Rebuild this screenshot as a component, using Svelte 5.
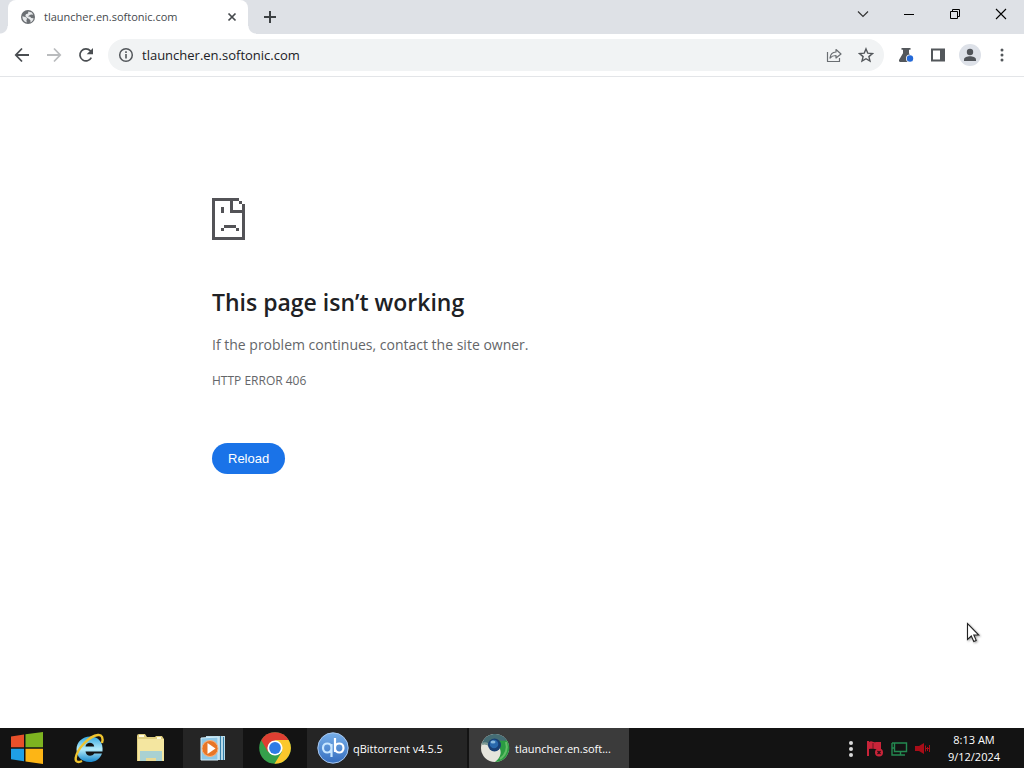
<script>
  let address = $state('tlauncher.en.softonic.com');
</script>

<div class="screen">
  <header class="tabstrip">
    <div class="tab">
      <svg class="globe" viewBox="0 0 16 16" width="16" height="16" aria-hidden="true">
        <circle cx="8" cy="8" r="7" fill="#6b6f73" />
        <path d="M2.400 7.300 6 8.200l1.200 1.500-.8 1.200.4 2.600C4 12.900 2.200 10.600 2.400 7.300zM8.300 2.400l3.600 1.100 1.300 2.300-2.200-.3-2 .9-.9 1.100 2 .3 1.200 1.200 2.300.3c-.3 2-1.500 3.500-3.200 4.300l.1-2-1.300-1.500-2.200-1.400L5.300 7l.6-1.700 2.200-.9z" fill="#e6e8ea" />
      </svg>
      <span class="tab-title">tlauncher.en.softonic.com</span>
      <button class="tab-close" aria-label="Close tab">
        <svg viewBox="0 0 16 16" width="16" height="16"><path d="M4.500 4.500l7 7m0-7l-7 7" stroke="#45494d" stroke-width="1.700" /></svg>
      </button>
    </div>
    <button class="new-tab" aria-label="New tab">
      <svg viewBox="0 0 16 16" width="16" height="16"><path d="M8 2v12M2 8h12" stroke="#3c4043" stroke-width="2" /></svg>
    </button>
    <div class="controls">
      <button aria-label="Search tabs"><svg viewBox="0 0 16 16" width="16" height="16"><path d="M3 5.500l5 5 5-5" fill="none" stroke="#333" stroke-width="1.200" /></svg></button>
      <button aria-label="Minimize"><svg viewBox="0 0 16 16" width="16" height="16"><path d="M3 8.500h10" stroke="#000" /></svg></button>
      <button aria-label="Restore"><svg viewBox="0 0 16 16" width="16" height="16"><path d="M3.500 5.500h7v7h-7zM5.500 5V3.500h7v7H11" fill="none" stroke="#000" /></svg></button>
      <button aria-label="Close"><svg viewBox="0 0 16 16" width="16" height="16"><path d="M3 3l10 10M13 3L3 13" stroke="#000" stroke-width="1.100" /></svg></button>
    </div>
  </header>

  <nav class="toolbar">
    <button aria-label="Back"><svg viewBox="0 0 16 16" width="16" height="16"><path d="M15 8H2M8 1.500L1.800 8 8 14.500" fill="none" stroke="#4a4e52" stroke-width="1.800" /></svg></button>
    <button aria-label="Forward" disabled><svg viewBox="0 0 16 16" width="16" height="16"><path d="M1 8h13M8 1.500L14.200 8 8 14.500" fill="none" stroke="#babcbe" stroke-width="1.800" /></svg></button>
    <button aria-label="Reload page"><svg viewBox="0 0 16 16" width="16" height="16"><path d="M13.300 10.600A6 6 0 1 1 12.400 3.900L13.600 5.200" fill="none" stroke="#4a4e52" stroke-width="1.700" /><path d="M15 1v6.300H8.700z" fill="#4a4e52" /></svg></button>
    <div class="omnibox">
      <button class="site-info" aria-label="Site information"><svg viewBox="0 0 16 16" width="16" height="16"><circle cx="8" cy="8" r="6.300" fill="none" stroke="#53575b" stroke-width="1.500" /><path d="M8 7v4.500M8 4.300V6" stroke="#53575b" stroke-width="1.600" /></svg></button>
      <input type="text" aria-label="Address" bind:value={address} />
      <button aria-label="Share"><svg viewBox="0 0 16 16" width="16" height="16"><path d="M1.500 5v9.500h12V11M4 11c.4-4 2.500-5.800 6-6V2.500L15 7l-5 4V8.500C7.400 8.500 5.500 9.200 4 11z" fill="none" stroke="#6a6e72" stroke-width="1.200" stroke-linejoin="round" /></svg></button>
      <button aria-label="Bookmark this tab"><svg viewBox="0 0 16 16" width="16" height="16"><path d="M8 1.900l1.800 4.300 4.600.4-3.500 3 1.100 4.500L8 11.700l-4 2.400 1.100-4.500-3.500-3 4.600-.4z" fill="none" stroke="#53575b" stroke-width="1.400" /></svg></button>
    </div>
    <button aria-label="Experiments"><svg viewBox="0 0 16 16" width="16" height="16"><path d="M3.500 1h9v1.800H11v3.400L15 13.300Q15 15 13.500 15H2Q.5 14.500 1 13L5 6.200V2.800H3.500z" fill="#53575b" /><circle cx="12" cy="11.500" r="4" fill="#fff" /><circle cx="12" cy="11.500" r="3.200" fill="#2469d8" /></svg></button>
    <button aria-label="Side panel"><svg viewBox="0 0 16 16" width="16" height="16"><path d="M1 1.500h14v13H1zm2 2v9h7v-9z" fill="#53575b" fill-rule="evenodd" /></svg></button>
    <button aria-label="Profile"><svg viewBox="0 0 24 24" width="24" height="24"><circle cx="12" cy="12" r="11" fill="#dde1e8" /><circle cx="12" cy="9" r="3.200" fill="#505459" /><path d="M6 18v-1.500c0-2.300 3.500-3.300 6-3.300s6 1 6 3.300V18z" fill="#505459" /></svg></button>
    <button aria-label="Menu"><svg viewBox="0 0 16 16" width="16" height="16"><g fill="#53575b"><circle cx="8" cy="3" r="1.500" /><circle cx="8" cy="8" r="1.500" /><circle cx="8" cy="13" r="1.500" /></g></svg></button>
  </nav>

  <main>
    <div class="message">
      <svg class="sad" viewBox="0 0 33 42" width="33" height="42" shape-rendering="crispEdges" aria-hidden="true">
        <path fill="#535357" d="M0 0h27v3H21v9h9V6h3v36H0zM3 3v36h27V15H18V3zM27 3h3v3h-3zM9 9h3v6H9zM12 27h12v3H12zM9 30h3v3H9zM24 30h3v3h-3z" fill-rule="evenodd" />
      </svg>
      <h1>This page isn’t working</h1>
      <p>If the problem continues, contact the site owner.</p>
      <div class="code">HTTP ERROR 406</div>
      <button class="reload">Reload</button>
    </div>
    <svg class="cursor" viewBox="0 0 14 22" width="14" height="22" aria-hidden="true">
      <path d="M1.500 1.500v16l3.800-3.500 2.500 5.500 2.400-1.100-2.400-5.400h5z" fill="#fff" stroke="#222" stroke-width="1.100" />
    </svg>
  </main>

  <footer class="taskbar">
    <button class="start" aria-label="Start">
      <svg viewBox="0 0 32 32" width="32" height="32"><path d="M0 4.500l13-2v12.800H0z" fill="#e8502a" /><path d="M14.500 2.200L32 0v15.300H14.500z" fill="#7db320" /><path d="M0 16.700h13v12.600l-13-2z" fill="#1f9fe6" /><path d="M14.500 16.700H32V32l-17.500-2.500z" fill="#fdb515" /></svg>
    </button>
    <button class="app" aria-label="Internet Explorer">
      <svg viewBox="0 0 32 32" width="32" height="32">
        <defs><linearGradient id="ie" x1="0" y1="0" x2="0" y2="1"><stop offset="0" stop-color="#35a8df" /><stop offset=".5" stop-color="#b5ecfa" /><stop offset="1" stop-color="#1687cc" /></linearGradient></defs>
        <path d="M29.500 19.500H12.500c.5 5 6.500 5.500 8.700 2H29C27 27.500 22 30 16.500 30 9 30 3.500 25 3.500 17.500S9.500 4.500 17 4.500c8.500 0 13.500 6 12.500 15zM12.500 14.500h8.700c-.6-5-8-5-8.700 0z" fill="url(#ie)" fill-rule="evenodd" />
        <path d="M29 11c1.500-5 0-8.500-4-8C16 4 4 17 2.700 26c-.5 4 2.500 5 6.300 3" fill="none" stroke="#efc42f" stroke-width="2.400" />
      </svg>
    </button>
    <button class="app" aria-label="File Explorer">
      <svg viewBox="0 0 32 32" width="32" height="32"><path d="M2 4q0-2 2-2h6l2 3h8l1-1h6l2 3v22H2z" fill="#e0cf80" /><path d="M3 7h26v22q-13-3-26 0z" fill="#f4e6a0" /><path d="M4 3h5v2H4zM22 5h4v2h-4z" fill="#fffbe0" /><path d="M5 19h22v10h-6v-3H11v3H5z" fill="#a9d1d2" /><path d="M11 26h10v3H11z" fill="#e8d994" /></svg>
    </button>
    <button class="app lit" aria-label="Media Player">
      <svg viewBox="0 0 32 32" width="32" height="32"><path d="M9 4h19v24H9z" fill="#b8dbe9" /><path d="M23.500 4v24M26.500 5v23" stroke="#347fa9" /><path d="M4 6l17-1v23H4z" fill="#8fc8e6" stroke="#d3edf9" /><circle cx="13" cy="16.500" r="8" fill="#e87626" stroke="#f9b580" /><path d="M10.500 11l8 5.500-8 5.500z" fill="#fff" /></svg>
    </button>
    <button class="app" aria-label="Chrome">
      <svg viewBox="0 0 32 32" width="32" height="32"><circle cx="16" cy="16" r="15.800" fill="#35a04b" /><path d="M16 16L2.300 8.200A15.800 15.800 0 0 1 29.700 8.200z" fill="#df3f32" /><path d="M16 8h13.600A15.800 15.800 0 0 1 15.500 31.800L23 19.500z" fill="#fbc82c" /><path d="M2.300 8.200L9 20l7-12z" fill="#df3f32" /><circle cx="16" cy="16" r="7.600" fill="#fff" /><circle cx="16" cy="16" r="5.900" fill="#2e7be6" /></svg>
    </button>
    <button class="window lit">
      <svg viewBox="0 0 32 32" width="32" height="32" aria-hidden="true">
        <defs><linearGradient id="qb" x1="0" y1="0" x2="0" y2="1"><stop offset="0" stop-color="#77afe9" /><stop offset="1" stop-color="#356ebf" /></linearGradient></defs>
        <circle cx="16" cy="16" r="15.200" fill="url(#qb)" stroke="#a9c8ee" /><g fill="none" stroke-width="2.200"><path d="M14.500 12v13M14.500 16c0-6-8.500-6-8.500 0s8.500 6 8.500 0" stroke="#c7e6ff" /><path d="M18 6v14M18 16c0-6 8.500-6 8.500 0S18 22 18 16" stroke="#fff" /></g>
      </svg>
      <span>qBittorrent v4.5.5</span>
    </button>
    <button class="window active">
      <svg viewBox="0 0 32 32" width="32" height="32" aria-hidden="true">
        <circle cx="16" cy="16" r="14" fill="#e5e4dc" /><path d="M16 16L3 11A14 14 0 0 1 28 8.500z" fill="#456d74" /><path d="M16 9l12-.5A14 14 0 0 1 16 30c4-3 7-8 5-13z" fill="#2b9c42" /><path d="M27 10c2 6 0 13-6 17" fill="none" stroke="#62bd65" stroke-width="2" /><path d="M3 12c5-2 8 1 10 6" fill="none" stroke="#7e9994" stroke-width="2" /><circle cx="15.500" cy="13" r="6.500" fill="#183f75" /><circle cx="15" cy="12" r="4.300" fill="#2868ac" /><ellipse cx="14" cy="10" rx="2.500" ry="1.500" fill="#87b9de" />
      </svg>
      <span>tlauncher.en.soft...</span>
    </button>
    <div class="tray">
      <button aria-label="Hidden icons"><svg viewBox="0 0 18 18" width="18" height="18"><g fill="#dadada"><circle cx="9" cy="4" r="2" /><circle cx="9" cy="10" r="2" /><circle cx="9" cy="16" r="2" /></g></svg></button>
      <button aria-label="Action center"><svg viewBox="0 0 18 18" width="18" height="18"><path d="M1 2h2v15H1zM3 3c3-2 4 1 7 0h5v7c-5 1-7-1-12 0z" fill="#c92439" /><path d="M7 4v6" stroke="#6b1722" /><circle cx="13" cy="13.500" r="4" fill="#c92439" /><path d="M11.500 12l3 3m0-3l-3 3" stroke="#221114" stroke-width="1.200" /></svg></button>
      <button aria-label="Network"><svg viewBox="0 0 18 18" width="18" height="18"><path d="M4.500 4h12v8.500h-12zM10.500 12.500V16M6 16h9M2 4v12h4M2 4h3M2 9h2" fill="none" stroke="#248a51" stroke-width="1.400" /></svg></button>
      <button aria-label="Volume"><svg viewBox="0 0 18 18" width="18" height="18"><path d="M1 7h4l5-3v11l-5-3H1z" fill="#a90d18" /><path d="M11.500 6.500v6M13.500 8v4M15.500 6v7" stroke="#a90d18" /><path d="M11 9.500h5" stroke="#a90d18" /></svg></button>
    </div>
    <div class="clock"><time>8:13 AM</time><time>9/12/2024</time></div>
  </footer>
</div>

<style>
  :global(body) { margin: 0; }
  .screen { display: flex; flex-direction: column; min-height: 100vh; background: #fff; font-family: "Open Sans", "Noto Sans", sans-serif; color: #202124; }
  button { display: flex; align-items: center; justify-content: center; padding: 0; border: 0; background: none; color: inherit; font: inherit; flex: none; }
  svg { display: block; flex: none; }
  .tabstrip { display: flex; height: 34px; padding-left: 8px; background: #dee1e6; }
  .tab { position: relative; display: flex; align-items: center; flex: 0 1 240px; box-sizing: border-box; padding: 0 8px 0 12px; gap: 8px; border-radius: 8px 8px 0 0; background: #fff; }
  .tab::before, .tab::after { content: ""; position: absolute; bottom: 0; width: 8px; height: 8px; }
  .tab::before { right: 100%; background: radial-gradient(circle at 0 0, transparent 7px, #fff 8px); }
  .tab::after { left: 100%; background: radial-gradient(circle at 100% 0, transparent 7px, #fff 8px); }
  .tab-title { flex: 1; font-size: 11px; line-height: 16px; color: #45494d; white-space: nowrap; }
  .tab-close { width: 16px; height: 16px; }
  .new-tab { width: 28px; margin-left: 8px; }
  .controls { display: flex; margin-left: auto; }
  .controls button { width: 46px; height: 28px; }
  .toolbar { display: flex; align-items: center; height: 42px; padding: 0 6px; border-bottom: 1px solid #e3e5e8; }
  .toolbar button { width: 32px; height: 32px; }
  .omnibox { display: flex; align-items: center; flex: 1; min-width: 0; height: 32px; margin: 0 6px; padding: 0 2px; border-radius: 16px; background: #f1f3f4; }
  input { flex: 1; min-width: 0; padding: 0; border: 0; outline: 0; background: none; font: 13px/20px "Open Sans", "Noto Sans", sans-serif; color: #202124; }
  main { position: relative; flex: 1; padding: 120px 24px 48px; }
  .message { max-width: 600px; margin: 0 auto; padding-top: 1px; }
  .sad { margin-bottom: 47px; }
  h1 { margin: 0 0 16px; font-size: 23px; line-height: 30px; font-weight: 600; }
  p { margin: 0 0 16px; font-size: 14px; line-height: 24px; color: #646669; }
  .code { font-size: 12px; line-height: 16px; color: #646669; }
  .reload { margin-top: 54px; padding: 0 16px; height: 31px; border-radius: 16px; background: #1a73e8; color: #fff; font: 13px/16px "Liberation Sans", Arial, sans-serif; }
  .cursor { position: absolute; right: 44px; bottom: 84px; filter: drop-shadow(1px 1px 1px #999); }
  .taskbar { display: flex; align-items: center; gap: 2px; height: 40px; background: #131313; color: #fff; font-size: 12px; line-height: 17px; }
  .start { width: 54px; height: 40px; margin-right: 3px; }
  .app { width: 60px; height: 40px; }
  .window { width: 160px; height: 40px; padding: 0 10px; gap: 4px; justify-content: flex-start; font-size: 11px; white-space: nowrap; }
  .lit { background: #252525; }
  .active { background: #3b3b3b; }
  .tray { display: flex; gap: 6px; margin-left: auto; }
  .tray button { width: 18px; height: 40px; }
  .clock { display: flex; flex-direction: column; align-items: center; width: 80px; margin-right: 10px; font-size: 11px; }
</style>
